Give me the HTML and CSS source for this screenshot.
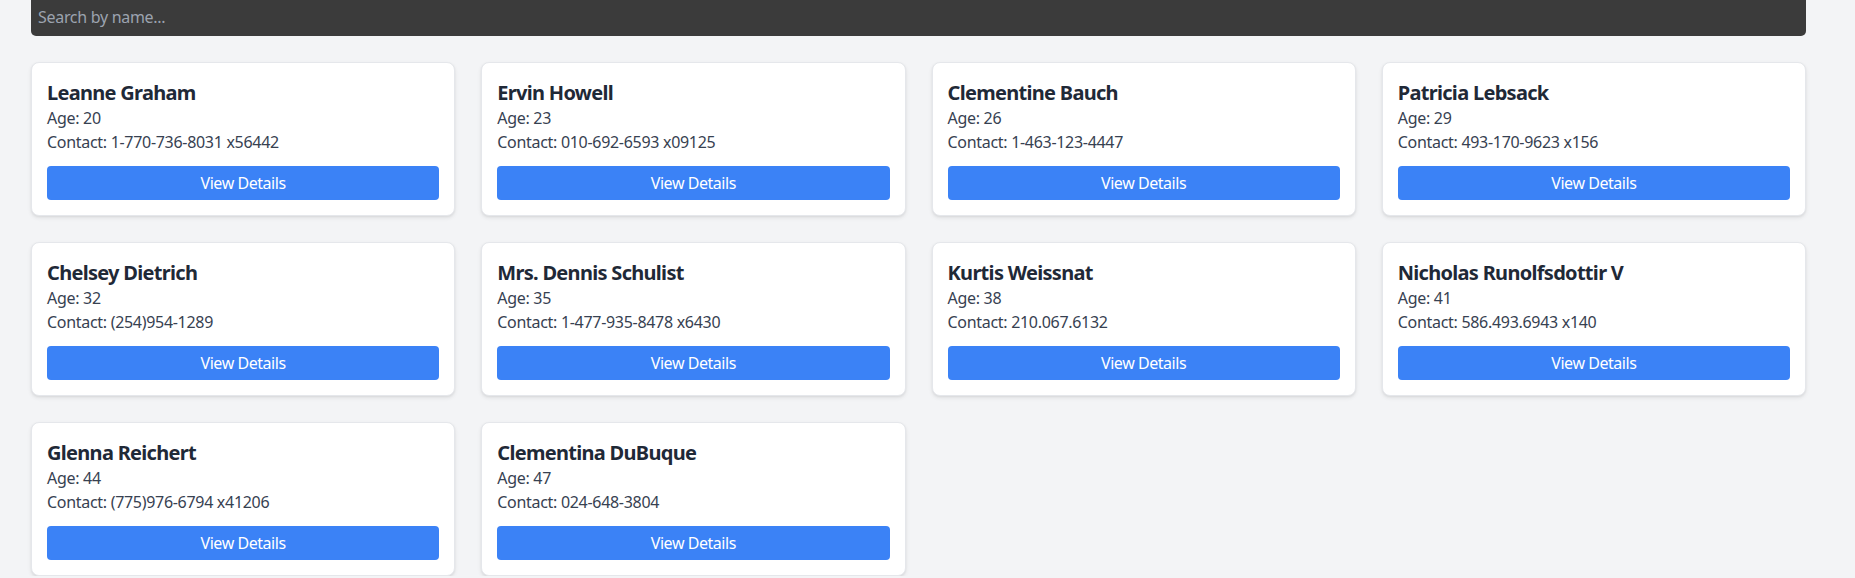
FILE: index.html
```html
<!DOCTYPE html>
<html lang="en">
<head>
<meta charset="utf-8">
<title>Users</title>
<link rel="stylesheet" href="styles.css">
</head>
<body>
<div class="page">
  <input class="search" type="text" placeholder="Search by name...">
  <div class="grid">
    <div class="card">
      <h2 class="name">Leanne Graham</h2>
      <p class="info">Age: 20</p>
      <p class="info">Contact: 1-770-736-8031 x56442</p>
      <button class="btn">View Details</button>
    </div>
    <div class="card">
      <h2 class="name">Ervin Howell</h2>
      <p class="info">Age: 23</p>
      <p class="info">Contact: 010-692-6593 x09125</p>
      <button class="btn">View Details</button>
    </div>
    <div class="card">
      <h2 class="name">Clementine Bauch</h2>
      <p class="info">Age: 26</p>
      <p class="info">Contact: 1-463-123-4447</p>
      <button class="btn">View Details</button>
    </div>
    <div class="card">
      <h2 class="name">Patricia Lebsack</h2>
      <p class="info">Age: 29</p>
      <p class="info">Contact: 493-170-9623 x156</p>
      <button class="btn">View Details</button>
    </div>
    <div class="card">
      <h2 class="name">Chelsey Dietrich</h2>
      <p class="info">Age: 32</p>
      <p class="info">Contact: (254)954-1289</p>
      <button class="btn">View Details</button>
    </div>
    <div class="card">
      <h2 class="name">Mrs. Dennis Schulist</h2>
      <p class="info">Age: 35</p>
      <p class="info">Contact: 1-477-935-8478 x6430</p>
      <button class="btn">View Details</button>
    </div>
    <div class="card">
      <h2 class="name">Kurtis Weissnat</h2>
      <p class="info">Age: 38</p>
      <p class="info">Contact: 210.067.6132</p>
      <button class="btn">View Details</button>
    </div>
    <div class="card">
      <h2 class="name">Nicholas Runolfsdottir V</h2>
      <p class="info">Age: 41</p>
      <p class="info">Contact: 586.493.6943 x140</p>
      <button class="btn">View Details</button>
    </div>
    <div class="card">
      <h2 class="name">Glenna Reichert</h2>
      <p class="info">Age: 44</p>
      <p class="info">Contact: (775)976-6794 x41206</p>
      <button class="btn">View Details</button>
    </div>
    <div class="card">
      <h2 class="name">Clementina DuBuque</h2>
      <p class="info">Age: 47</p>
      <p class="info">Contact: 024-648-3804</p>
      <button class="btn">View Details</button>
    </div>
  </div>
</div>
</body>
</html>
```

FILE: styles.css
```css
* {
  box-sizing: border-box;
}

html, body {
  margin: 0;
  padding: 0;
  background: #f3f4f6;
  font-family: "Noto Sans", "Open Sans", sans-serif;
  color: #374151;
}

.page {
  padding: 0 49px 0 31px;
  display: flex;
  flex-direction: column;
  gap: 26px;
}

.search {
  display: block;
  width: 100%;
  height: 36px;
  margin: 0;
  border: none;
  border-radius: 0 0 5px 5px;
  background: #3b3b3b;
  color: #e5e7eb;
  font-family: inherit;
  font-size: 16px;
  letter-spacing: -0.3px;
  padding: 0 7px 2px;
  outline: none;
}

.search::placeholder {
  color: #9ca3af;
}

.grid {
  display: grid;
  grid-template-columns: repeat(4, 1fr);
  gap: 26px;
}

.card {
  background: #ffffff;
  border: 1px solid #e5e7eb;
  border-radius: 8px;
  padding: 15px;
  box-shadow: 0 2px 4px rgba(0, 0, 0, 0.08), 0 1px 2px rgba(0, 0, 0, 0.05);
  display: flex;
  flex-direction: column;
}

.name {
  margin: 0;
  padding-top: 1px;
  font-size: 20px;
  line-height: 27px;
  font-weight: 700;
  letter-spacing: -0.7px;
  color: #1f2937;
}

.info {
  margin: 0;
  font-size: 16px;
  line-height: 24px;
  letter-spacing: -0.3px;
  color: #374151;
}

.btn {
  margin-top: 12px;
  height: 34px;
  border: none;
  border-radius: 4px;
  background: #3b82f6;
  color: #ffffff;
  font-family: inherit;
  font-size: 16px;
  line-height: 24px;
  letter-spacing: -0.45px;
  padding: 0;
  cursor: pointer;
}
```
